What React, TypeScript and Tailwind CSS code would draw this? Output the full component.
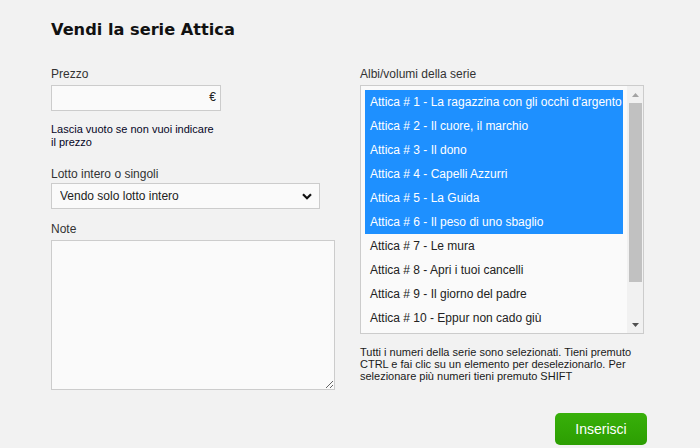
import { useState } from 'react';

const albi = [
  'Attica # 1 - La ragazzina con gli occhi d\'argento',
  'Attica # 2 - Il cuore, il marchio',
  'Attica # 3 - Il dono',
  'Attica # 4 - Capelli Azzurri',
  'Attica # 5 - La Guida',
  'Attica # 6 - Il peso di uno sbaglio',
  'Attica # 7 - Le mura',
  'Attica # 8 - Apri i tuoi cancelli',
  'Attica # 9 - Il giorno del padre',
  'Attica # 10 - Eppur non cado giù',
];

const App = () => {
  const [selected] = useState([0, 1, 2, 3, 4, 5]);

  return (
    <div className="min-h-[448px] w-[700px] bg-[#f2f2f2] pl-[51px] pt-[20px] font-['Liberation_Sans',Arial,sans-serif] text-[#333]">
      <h1 className="font-['DejaVu_Sans',Verdana,sans-serif] text-[16.2px] leading-[20px] font-bold text-[#111]">
        Vendi la serie Attica
      </h1>

      <div className="mt-[27px] flex w-[596px] gap-[25px]">
        {/* colonna sinistra */}
        <div className="flex w-[284px] flex-col">
          <label className="mb-[4px] text-[12px] leading-[14px]">Prezzo</label>
          <div className="relative h-[26px] w-[170px]">
            <input
              type="text"
              className="h-full w-full border border-[#ccc] bg-[#fafafa] pr-[20px] pl-[6px] text-[12px] outline-none"
            />
            <span className="absolute top-[5px] right-[5px] text-[12px] leading-[14px] text-[#222]">€</span>
          </div>
          <p className="mt-[12px] text-[11px] leading-[13px] text-[#05051f]">
            Lascia vuoto se non vuoi indicare
            <br />
            il prezzo
          </p>

          <label className="mt-[18px] mb-[2px] text-[12px] leading-[14px]">Lotto intero o singoli</label>
          <div className="relative h-[26px] w-[269px]">
            <select className="h-full w-full appearance-none border border-[#ccc] bg-[#fafafa] pl-[8px] text-[12px] text-[#222] outline-none">
              <option>Vendo solo lotto intero</option>
            </select>
            <svg
              className="pointer-events-none absolute top-[10px] right-[8px]"
              width="10"
              height="7"
              viewBox="0 0 10 7"
            >
              <path d="M1 1.2 L5 5.2 L9 1.2" fill="none" stroke="#111" strokeWidth="2.2" />
            </svg>
          </div>

          <label className="mt-[13px] mb-[4px] text-[12px] leading-[14px]">Note</label>
          <textarea className="h-[150px] w-[284px] border border-[#ccc] bg-[#fafafa] p-[4px] text-[12px] outline-none" />
        </div>

        {/* colonna destra */}
        <div className="flex w-[284px] flex-col">
          <label className="mb-[4px] text-[12px] leading-[14px]">Albi/volumi della serie</label>
          <div className="flex h-[249px] w-[284px] overflow-hidden border border-[#ccc] bg-[#fafafa]">
            <div className="flex-1 overflow-hidden py-[4px] pr-[4px] pl-[4px]">
              {albi.map((titolo, i) => {
                const sel = selected.includes(i);
                return (
                  <div
                    key={titolo}
                    className={
                      sel
                        ? 'h-[24px] overflow-hidden bg-[#1e90ff] pl-[5px] text-[12px] leading-[24px] whitespace-nowrap text-white'
                        : 'h-[24px] overflow-hidden pl-[5px] text-[12px] leading-[24px] whitespace-nowrap text-[#222]'
                    }
                  >
                    {titolo}
                  </div>
                );
              })}
            </div>
            <div className="flex w-[16px] flex-col items-center bg-[#f1f1f1]">
              <div className="flex h-[17px] items-center justify-center">
                <svg width="7" height="4" viewBox="0 0 7 4">
                  <path d="M0 4 L3.5 0 L7 4 Z" fill="#a3a3a3" />
                </svg>
              </div>
              <div className="h-[179px] w-[13px] bg-[#c1c1c1]" />
              <div className="flex-1" />
              <div className="flex h-[17px] items-center justify-center">
                <svg width="7" height="4" viewBox="0 0 7 4">
                  <path d="M0 0 L7 0 L3.5 4 Z" fill="#505050" />
                </svg>
              </div>
            </div>
          </div>
          <p className="mt-[12px] text-[11px] leading-[12px] text-[#1a1a1a]">
            Tutti i numeri della serie sono selezionati. Tieni premuto
            <br />
            CTRL e fai clic su un elemento per deselezionarlo. Per
            <br />
            selezionare più numeri tieni premuto SHIFT
          </p>
        </div>
      </div>

      <div className="mt-[23px] flex w-[596px] justify-end">
        <button className="h-[32px] w-[92px] rounded-[5px] bg-gradient-to-b from-[#38b00a] to-[#2c9e02] text-[14px] text-white">
          Inserisci
        </button>
      </div>
    </div>
  );
};

export default App;
